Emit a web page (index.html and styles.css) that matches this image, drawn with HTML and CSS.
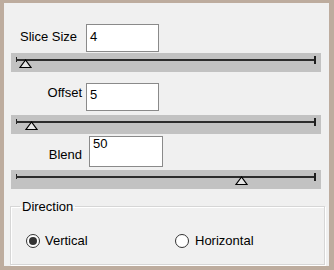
FILE: index.html
```html
<!DOCTYPE html>
<html>
	<head>
		<meta charset="UTF-8">
		<title>Slice</title>
		<link rel="stylesheet" href="styles.css">
	</head>
	<body>
		<div class="frame">
			<div class="row row-size">
				<span class="lbl">Slice Size</span>
				<span class="field">4</span>
			</div>
			<div class="bar">
				<i class="tick-l"></i><i class="line"></i><i class="tick-r"></i>
				<svg class="thumb" style="left:8px" width="13" height="10" viewBox="0 0 13 10"><polygon points="6.5,1 1,8.5 12,8.5" /></svg>
			</div>
			<div class="row row-offset">
				<span class="lbl">Offset</span>
				<span class="field">5</span>
			</div>
			<div class="bar">
				<i class="tick-l"></i><i class="line"></i><i class="tick-r"></i>
				<svg class="thumb" style="left:14px" width="13" height="10" viewBox="0 0 13 10"><polygon points="6.5,1 1,8.5 12,8.5" /></svg>
			</div>
			<div class="row row-blend">
				<span class="lbl">Blend</span>
				<span class="field">50</span>
			</div>
			<div class="bar">
				<i class="tick-l"></i><i class="line"></i><i class="tick-r"></i>
				<svg class="thumb" style="left:224px" width="13" height="10" viewBox="0 0 13 10"><polygon points="6.5,1 1,8.5 12,8.5" /></svg>
			</div>
			<fieldset class="group">
				<legend>Direction</legend>
				<div class="radios">
					<label class="radio on"><span class="dot"></span>Vertical</label>
					<label class="radio"><span class="dot"></span>Horizontal</label>
				</div>
			</fieldset>
		</div>
	</body>
</html>
```
FILE: styles.css
```css
html,body{
	margin: 0;
	padding: 0;
}
body{
	font-family: "Liberation Sans", Arial, sans-serif;
	font-size: 13px;
	line-height: 15px;
	color: #000;
	background: #bdac9e;
}
.frame{
	box-sizing: border-box;
	width: 334px;
	height: 270px;
	border-style: solid;
	border-color: #bdac9e;
	border-width: 3px 5px 4px 4px;
	background: #f0f0f0;
	padding-top: 21px;
}
.row{
	display: flex;
	align-items: flex-start;
}
.lbl{
	box-sizing: border-box;
	width: 82px;
	text-align: right;
	padding-right: 4px;
}
.field{
	box-sizing: border-box;
	width: 73px;
	height: 28px;
	border: 1px solid #8a8a8a;
	background: #fff;
	padding-left: 3px;
}
.row-size .lbl{
	text-align: left;
	padding-left: 16px;
	margin-top: 5px;
}
.row-size .field{
	padding-top: 4px;
}
.row-offset{
	margin-top: 11px;
}
.row-offset .lbl{
	margin-top: 2px;
}
.row-offset .field{
	padding-top: 3px;
}
.row-blend{
	margin-top: 2px;
}
.row-blend .lbl{
	width: 85px;
	padding-right: 7px;
	margin-top: 11px;
}
.row-blend .field{
	width: 74px;
	height: 31px;
	line-height: 13px;
	padding-top: 0;
}
.bar{
	position: relative;
	width: 310px;
	height: 19px;
	margin-left: 7px;
	margin-top: 1px;
	background: #c2c2c2;
}
.row-offset + .bar{
	margin-top: 4px;
}
.row-blend + .bar{
	margin-top: 3px;
}
.bar i{
	position: absolute;
	background: #1e1e1e;
}
.bar .line{
	left: 5px;
	width: 300px;
	top: 6px;
	height: 2px;
	background: #2c2c2c;
}
.bar .tick-l{
	left: 5px;
	width: 1px;
	top: 4px;
	height: 5px;
}
.bar .tick-r{
	left: 303px;
	width: 2px;
	top: 3px;
	height: 8px;
}
.thumb{
	position: absolute;
	top: 6px;
}
.thumb polygon{
	fill: #e4e4e4;
	stroke: #000;
	stroke-width: 1.2;
}
.group{
	box-sizing: border-box;
	width: 314px;
	height: 66px;
	margin: 10px 0 0 6px;
	padding: 19px 0 0 15px;
	border: 1px solid #d6d6d6;
	box-shadow: inset 1px 1px 0 #fff, 1px 1px 0 #fff;
}
.group legend{
	padding: 0 2px;
	margin-left: -6px;
}
.radios{
	display: flex;
}
.radio{
	display: flex;
	align-items: center;
	width: 149px;
}
.dot{
	box-sizing: border-box;
	width: 14px;
	height: 14px;
	border: 1px solid #333;
	border-radius: 50%;
	background: #fff;
	margin-right: 5px;
	display: flex;
	align-items: center;
	justify-content: center;
}
.radio + .radio .dot{
	margin-right: 6px;
}
.on .dot::after{
	content: "";
	width: 8px;
	height: 8px;
	border-radius: 50%;
	background: #333;
}
```
